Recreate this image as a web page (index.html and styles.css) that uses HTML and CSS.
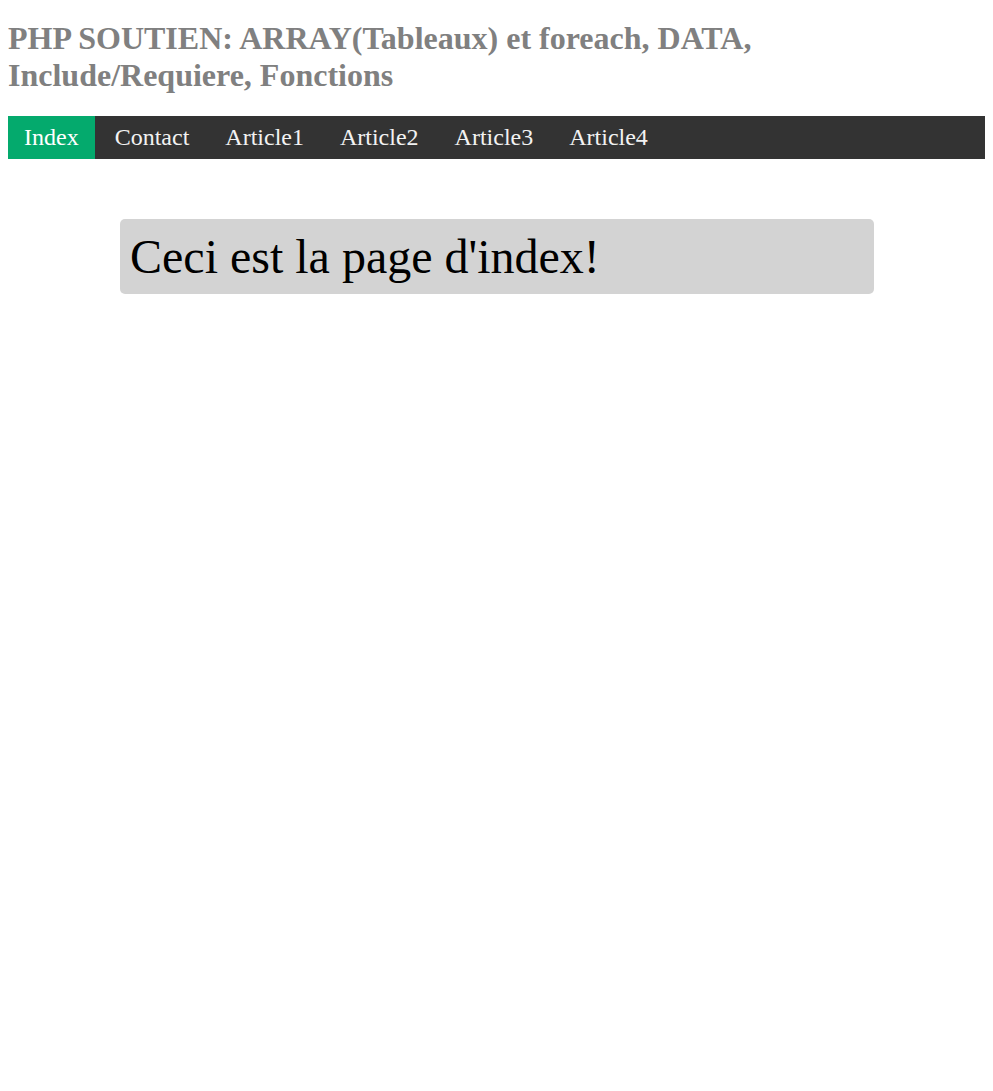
FILE: index.html
```html
<!DOCTYPE html>
<html lang="fr">
<head>
<meta charset="utf-8">
<title>PHP SOUTIEN</title>
<link rel="stylesheet" href="styles.css">
</head>
<body>
<h1 class="title">PHP SOUTIEN: ARRAY(Tableaux) et foreach, DATA, Include/Requiere, Fonctions</h1>
<nav class="topnav">
  <a class="nav-link active" href="#">Index</a>
  <a class="nav-link" href="#">Contact</a>
  <a class="nav-link" href="#">Article1</a>
  <a class="nav-link" href="#">Article2</a>
  <a class="nav-link" href="#">Article3</a>
  <a class="nav-link" href="#">Article4</a>
</nav>
<div class="content">Ceci est la page d'index!</div>
</body>
</html>
```

FILE: styles.css
```css
body {
  margin: 8px;
  font-family: "Liberation Serif", "Times New Roman", serif;
  background: #ffffff;
}

.title {
  font-size: 32px;
  font-weight: bold;
  color: #808080;
  margin: 11.5px 0 22.44px;
}

.topnav {
  display: flex;
  gap: 4px;
  background-color: #333333;
}

.nav-link {
  display: block;
  color: #f2f2f2;
  text-decoration: none;
  font-size: 24px;
  line-height: 27px;
  padding: 8px 16px;
}

.nav-link.active {
  background-color: #04aa6d;
  color: #ffffff;
}

.content {
  margin: 60px 111px 0 112px;
  padding: 10px;
  background-color: #d3d3d3;
  border-radius: 5px;
  font-size: 48px;
  line-height: 55px;
  color: #000000;
}
```
